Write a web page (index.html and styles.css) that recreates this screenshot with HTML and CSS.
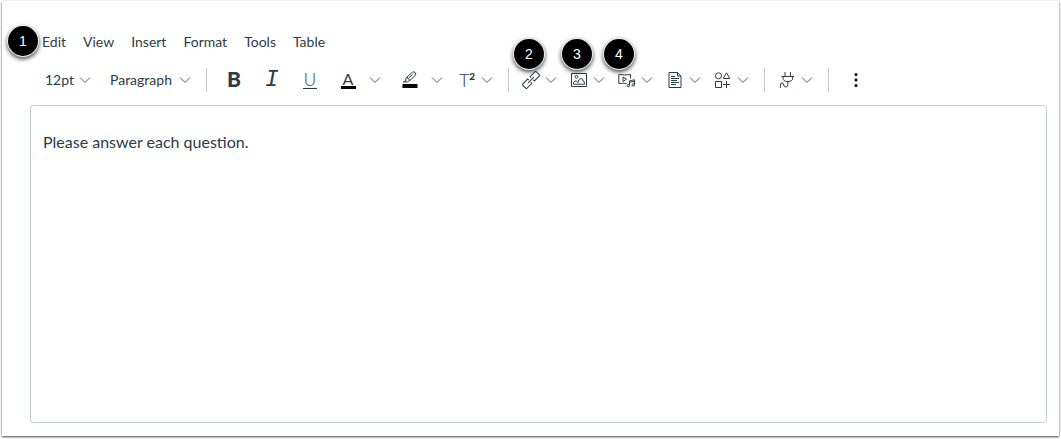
FILE: index.html
```html
<!DOCTYPE html>
<html lang="en">
<head>
  <meta charset="utf-8">
  <title>Rich Content Editor</title>
  <link rel="stylesheet" href="styles.css">
</head>
<body>
  <svg class="defs" aria-hidden="true">
    <symbol id="chevron" viewBox="0 0 12 8"><path d="M1 1.5l5 5 5-5"/></symbol>
  </svg>
  <main class="card">
    <nav class="menubar">
      <span class="badge badge-menu">1</span>
      <button>Edit</button>
      <button>View</button>
      <button>Insert</button>
      <button>Format</button>
      <button>Tools</button>
      <button>Table</button>
    </nav>

    <div class="toolbar">
      <select class="size" aria-label="Font size"><option>12pt</option></select>
      <select class="block" aria-label="Block type"><option>Paragraph</option></select>
      <span class="separator"></span>

      <button class="format bold" aria-label="Bold">B</button>
      <button class="format italic" aria-label="Italic">I</button>
      <button class="format underline" aria-label="Underline"><span>U</span></button>
      <div class="split wide">
        <button class="main color" aria-label="Text color"><span>A</span></button>
        <button class="arrow" aria-label="Text colors"><svg><use href="#chevron"/></svg></button>
      </div>
      <div class="split wide">
        <button class="main" aria-label="Background color">
          <svg class="icon" viewBox="0 0 18 18">
            <path d="M6 6L11.500 1.200Q13 .3 14.200 1.600T14.300 4.300L9 9.300Q7 8.300 6 6zM6 6L4.600 8l.4 1.600-2.600 1.300h4.200l.7-.6L9 9.300M7.500 7.200l4-3.700"/>
            <path class="bar" d="M1.500 13h15v4h-15z"/>
          </svg>
        </button>
        <button class="arrow" aria-label="Background colors"><svg><use href="#chevron"/></svg></button>
      </div>
      <div class="split">
        <button class="main super" aria-label="Superscript">T<sup>2</sup></button>
        <button class="arrow" aria-label="Superscript and subscript"><svg><use href="#chevron"/></svg></button>
      </div>
      <span class="separator"></span>

      <div class="split">
        <span class="badge badge-tool">2</span>
        <button class="main" aria-label="Links">
          <svg class="icon" viewBox="0 0 18 18">
            <g transform="rotate(-45 9 9)">
              <path d="M7.300 10.500v1.500H-.5V6h7.800v1.500M10.700 7.500V6h7.800v6h-7.800v-1.500M5 9h8"/>
            </g>
          </svg>
        </button>
        <button class="arrow" aria-label="Link options"><svg><use href="#chevron"/></svg></button>
      </div>
      <div class="split">
        <span class="badge badge-tool">3</span>
        <button class="main" aria-label="Images">
          <svg class="icon" viewBox="0 0 18 18">
            <path d="M1.500 2.500h15v13h-15z"/>
            <circle cx="6.500" cy="5.800" r="1.400"/>
            <path d="M3.500 13.200v-1.700Q5 9.200 6.500 10.200q1 .8 1.300 1.400Q9 7.500 11 7.500t2 2.500q1.500.3 1.500 1.600v1.600z"/>
          </svg>
        </button>
        <button class="arrow" aria-label="Image options"><svg><use href="#chevron"/></svg></button>
      </div>
      <div class="split">
        <span class="badge badge-tool badge-media">4</span>
        <button class="main" aria-label="Media">
          <svg class="icon" viewBox="0 0 18 18">
            <path d="M8.500 12.500q-4-.6-7.700 0v-9q6 .9 11.700 0v4M5 6v4.500L8.500 8.200z"/>
            <path d="M11.500 14.500V9.800l5-1v5M11.500 11.300l5-1"/>
            <circle cx="10.300" cy="14.700" r="1.200"/>
            <circle cx="15.300" cy="13.900" r="1.200"/>
          </svg>
        </button>
        <button class="arrow" aria-label="Media options"><svg><use href="#chevron"/></svg></button>
      </div>
      <div class="split">
        <button class="main" aria-label="Documents">
          <svg class="icon" viewBox="0 0 18 18">
            <path d="M3 1.500h8.500L15 5v11.500H3zM11.500 1.500V5H15M5 5.500h4M5 7.500h8M5 9.500h6M5 11.500h8M5 13.500h5"/>
          </svg>
        </button>
        <button class="arrow" aria-label="Document options"><svg><use href="#chevron"/></svg></button>
      </div>
      <div class="split">
        <button class="main" aria-label="Icons">
          <svg class="icon" viewBox="0 0 18 18">
            <circle cx="4.500" cy="4.800" r="3"/>
            <path d="M12.500 1.800l3.300 5.700H9.200zM1.500 10.500h6v6h-6zM12.500 10v7M9 13.500h7"/>
          </svg>
        </button>
        <button class="arrow" aria-label="Icon options"><svg><use href="#chevron"/></svg></button>
      </div>
      <span class="separator"></span>

      <div class="split">
        <button class="main" aria-label="Apps">
          <svg class="icon" viewBox="0 0 18 18">
            <path d="M7 1v4.500M12.500 1v4.500M3.500 5.500H16M5 5.500v1.700q0 3.300 4.800 3.300t4.800-3.300V5.500M9.800 10.500v3q0 2.500-2 2.500t-2-2-1.800-2q-1.700 0-1.700 2.200V17"/>
          </svg>
        </button>
        <button class="arrow" aria-label="App options"><svg><use href="#chevron"/></svg></button>
      </div>
      <span class="separator"></span>

      <button class="format more" aria-label="More">
        <svg class="icon" viewBox="0 0 18 18">
          <circle cx="9" cy="3.500" r="1.500"/>
          <circle cx="9" cy="9" r="1.500"/>
          <circle cx="9" cy="14.500" r="1.500"/>
        </svg>
      </button>
    </div>

    <textarea class="editor" aria-label="Content" spellcheck="false">Please answer each question.</textarea>
  </main>
</body>
</html>
```

FILE: styles.css
```css
* {
  box-sizing: border-box;
}

body {
  margin: 0;
  min-height: 100vh;
  display: flex;
  background: #fff;
  color: #2d3b45;
  font-family: Lato, sans-serif;
  font-size: 14px;
}

button,
select,
textarea {
  margin: 0;
  padding: 0;
  border: 0;
  background: none;
  color: inherit;
  font: inherit;
}

button {
  cursor: pointer;
}

svg {
  display: block;
  fill: none;
  stroke: #2d3b45;
}

.defs {
  position: absolute;
  width: 0;
  height: 0;
}

.card {
  flex: 1;
  display: flex;
  flex-direction: column;
  margin: 1px 2px 3px;
  padding: 31px 12px 13px 28px;
  background: #fff;
  box-shadow: 0 1px 2px rgba(0, 0, 0, 0.75);
}

.menubar {
  position: relative;
  display: flex;
  gap: 17px;
  padding-left: 12px;
  line-height: 20px;
}

.toolbar {
  display: flex;
  align-items: center;
  margin: 14px 0 11px;
  padding-left: 15px;
}

select {
  appearance: none;
  height: 28px;
  margin-right: 19px;
  padding-bottom: 2px;
  background: url("data:image/svg+xml,%3Csvg xmlns='http://www.w3.org/2000/svg' width='12' height='8' fill='none' stroke='%232d3b45' stroke-width='.8'%3E%3Cpath d='M1 1.500l5 5 5-5'/%3E%3C/svg%3E") no-repeat right center;
}

.size {
  width: 46px;
}

.block {
  width: 81px;
  margin-right: 0;
}

.separator {
  width: 1px;
  height: 24px;
  margin: 0 8px 0 15px;
  background: #c7cdd1;
}

.format {
  width: 38px;
  height: 28px;
}

.bold {
  padding-bottom: 2px;
  font-size: 21px;
  font-weight: 900;
  line-height: 26px;
}

.italic {
  font-family: "Liberation Mono", monospace;
  font-size: 23px;
  font-style: italic;
  font-weight: 300;
  line-height: 28px;
}

.underline span {
  display: block;
  width: 14px;
  margin: 0 auto;
  border-bottom: 1px solid #2d3b45;
  font-size: 17px;
  font-weight: 300;
  line-height: 16px;
}

.split {
  position: relative;
  display: flex;
}

.split + .split {
  margin-left: 8px;
}

.main {
  display: flex;
  align-items: center;
  justify-content: center;
  width: 28px;
  height: 28px;
}

.arrow {
  width: 12px;
}

.arrow svg {
  width: 12px;
  height: 8px;
  margin: 0 auto;
  stroke-width: 0.8;
}

.wide .main {
  width: 38px;
}

.wide .arrow {
  width: 16px;
}

.color span {
  width: 15px;
  border-bottom: 3px solid #000;
  font-size: 16px;
  line-height: 14px;
}

.super {
  font-size: 18px;
  font-weight: 300;
  line-height: 20px;
}

.super sup {
  align-self: flex-start;
  font-size: 10px;
  font-weight: 900;
}

.icon {
  width: 18px;
  height: 18px;
}

.bar,
.more .icon {
  fill: #000;
  stroke: none;
}

.more .icon {
  margin: 0 auto;
}

.badge {
  position: absolute;
  width: 30px;
  height: 30px;
  border-radius: 50%;
  background: #000;
  color: #fff;
  font-family: "Liberation Sans", sans-serif;
  font-size: 14px;
  line-height: 30px;
  text-align: center;
  box-shadow: 0 0 0 1px #eee, 0 2px 4px 1px rgba(0, 0, 0, 0.7);
}

.badge-menu {
  top: -6px;
  left: -22px;
}

.badge-tool {
  top: -27px;
  left: -3px;
}

.badge-media {
  left: -9px;
}

.editor {
  flex: 1;
  width: 100%;
  padding: 24px 12px;
  border: 1px solid #c7cdd1;
  border-radius: 3px;
  outline: 0;
  resize: none;
  font-size: 16px;
  line-height: 24px;
}
```
